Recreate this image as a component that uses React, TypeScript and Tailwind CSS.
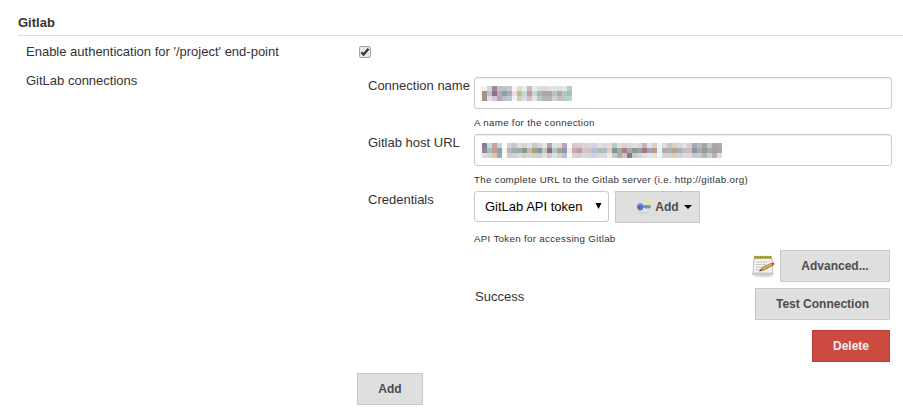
import type { ReactNode } from 'react';

const nameMosaic = [
  ['#f3f0ee', '#cfd9d3', '#9c84a0', '#c9bcc9', '#b9c6c9', '#c8c8ca', '#f6f8f8', '#dedfd2', '#e9ecec', '#cbb8b8', '#e6ebeb', '#d9dfe1', '#dbdbdb', '#e3e2e2', '#dce6e8', '#e3dfd6', '#dfe9e9', '#b8c9c8'],
  ['#a3928b', '#bac7bf', '#8d718e', '#b6a8bb', '#8fa0a4', '#a8aeb4', '#e6e1de', '#bdbc94', '#c5d5d8', '#b99f9f', '#cfd6d7', '#9eb9b8', '#b0a5ac', '#afa5a8', '#b2c5ce', '#b5aa94', '#aec6ca', '#aabdbc'],
  ['#a3928b', '#d9e2df', '#d0c7d1', '#b9a6ba', '#b4c2c4', '#bccaca', '#f4f4f4', '#d0d0b4', '#d2dfe1', '#cfc0c0', '#e1e6e8', '#b6cccb', '#bab4b8', '#b8b3b7', '#cbd1d6', '#cdbfa9', '#b9cbd0', '#bfcdcc'],
];

const urlMosaic = [
  ['#7b819d', '#c9d9d5', '#c7a0a0', '#c6d4d8', '#ffffff', '#d4d2d2', '#c7c6cb', '#dcdfdc', '#d4d4d4', '#dbe2df', '#c8c6c8', '#ced7df', '#e8e6e3', '#b7a5a5', '#dce4e3', '#e5dad0', '#b7a9b8', '#f9f9f9', '#d9c9c9', '#cfcfd2', '#e4cfcf', '#cbdedb', '#d6cfdd', '#dfe1e1', '#d8dcdf', '#e5dad6', '#b6cbce', '#dce0d8', '#e1ccce', '#d9d7de', '#dfe1e0', '#dfd6da', '#c7b0b4', '#dfe3e9', '#dfccc3', '#e5f4fd', '#ded9dc', '#c4c6ca', '#d9d1bf', '#d1dbdf', '#e2dfdf', '#dccaca', '#a6abba', '#b4b8c1', '#a7a6a2', '#bec8cf', '#aaa5a8', '#b7aaa0'],
  ['#8f8799', '#9ec0c1', '#bda092', '#8ba4b5', '#f4f4f2', '#b7b7b8', '#a3aaad', '#99b1ae', '#8d958e', '#c0bab9', '#aaa078', '#789aaf', '#c4c4c4', '#8d7084', '#b7c6c4', '#a5a58c', '#9297b6', '#f3ede5', '#c6acaf', '#b1a3a3', '#d2c7cb', '#d7c0c4', '#b4bfd0', '#b7b8b6', '#b1bec5', '#e0cfc0', '#7f9798', '#a2ac9c', '#a28089', '#b5a6a1', '#8c9796', '#96a2a9', '#a47680', '#9aa6bd', '#b89b88', '#e5f4fd', '#b7a9a5', '#a6b2b6', '#b3a58a', '#a5b3c1', '#c4bbba', '#d2bebc', '#8d96a6', '#a2adb6', '#9d9b9b', '#a4adb8', '#aaa19b', '#a2a6b6'],
  ['#e0d9d9', '#d1d8d9', '#e2c5aa', '#99a9bc', '#ffffff', '#cfcfcf', '#cbd4d2', '#d6dbd8', '#d1cfc6', '#d7d7d7', '#d4d0c2', '#bfd2dc', '#dfdfdf', '#d4c5cf', '#dce3e3', '#d3d2c4', '#b9bad2', '#fafafa', '#dfcfce', '#d7cfcf', '#ded7dc', '#cbd9dc', '#d5cfde', '#d9dcdb', '#d5dce1', '#f2eae0', '#c2cdd1', '#a5b4a2', '#d5bec0', '#7c7c91', '#c6c9c8', '#cdd4db', '#e6dadd', '#e2e6ec', '#e9ded8', '#e5f4fd', '#d9d3d2', '#ced5d9', '#d6cfbf', '#ccd3df', '#dfdcdc', '#e1d5d5', '#c5c8ce', '#c6ccd2', '#aeb9b5', '#c6ced8', '#b7b0ab', '#dae0e9'],
];

function Mosaic({ rows }: { rows: string[][] }) {
  return (
    <div className="border-l-2 border-[#fdf6ee]">
      {rows.map((row, r) => (
        <div key={r} className="flex">
          {row.map((color, c) => (
            <span key={c} className="h-[5px] w-[5px]" style={{ backgroundColor: color }} />
          ))}
        </div>
      ))}
    </div>
  );
}

function Field({ rows }: { rows: string[][] }) {
  return (
    <div className="flex h-8 w-[418px] items-start rounded-[3px] border border-[#c9c9c9] pl-[5px] pt-2 shadow-[inset_0_1px_1px_rgba(0,0,0,0.07)]">
      <Mosaic rows={rows} />
    </div>
  );
}

function Button({ children, className = '' }: { children: ReactNode; className?: string }) {
  return (
    <button className={`flex h-8 items-center justify-center border border-[#c8c8c8] bg-[#dfdfdf] text-[12px] font-bold text-[#4d4d4d] ${className}`}>
      {children}
    </button>
  );
}

function Help({ children, className = '' }: { children: ReactNode; className?: string }) {
  return <p className={`ml-[117px] h-[25px] whitespace-nowrap text-[9.75px] leading-[25px] tracking-[0.3px] ${className}`}>{children}</p>;
}

function Label({ children }: { children: ReactNode }) {
  return <label className="w-[117px] shrink-0 pl-[11px] leading-[18px]">{children}</label>;
}

function KeyIcon() {
  return (
    <svg width="16" height="16" viewBox="0 0 16 16" className="mr-[3px] shrink-0">
      <ellipse cx="7.5" cy="13.8" rx="5.5" ry="0.7" fill="#cbcbcb" />
      <path d="M1 8C1 5.2 2.4 4.2 4.4 4.2C6 4.2 7 5 7.4 6.2H14.6V8.4H13.6V9.6H12.2V8.6H11.2V9.8H9.8V8.8H7.4C7 10.4 6 11.4 4.2 11.4C2.2 11.4 1 10.2 1 8Z" fill="#5478bc" />
      <path d="M2.2 6.2C3.6 4.8 5.6 5 6.6 7H14" fill="none" stroke="#809fd2" strokeWidth="1" />
      <circle cx="2.9" cy="8" r=".8" fill="#3b568f" />
      <path d="M12.3 1L13.2 2.7L15.4 2.2L14.4 4L15.4 5.6L13.2 5.2L12.3 6.6L11.4 5.2L9.6 5.6L10.6 4L9.6 2.4L11.4 2.7Z" fill="#f1e96a" />
    </svg>
  );
}

function NotepadIcon() {
  return (
    <svg width="24" height="24" viewBox="0 0 24 24">
      <ellipse cx="11" cy="22" rx="10" ry="1" fill="#d6d6d6" />
      <path d="M2 4H20L21 20.5H.8Z" fill="#f1f1f1" stroke="#b3b3b3" strokeWidth=".8" />
      <path d="M.8 18.5H20.8V21H.6Z" fill="#c9c9c9" />
      <path d="M2 2H19.5V5H2Z" fill="#b7ad57" />
      <path d="M3.5 1.8V4M6 1.8V4M8.5 1.8V4M11 1.8V4M13.5 1.8V4M16 1.8V4M18.5 1.8V4" stroke="#8b8236" strokeWidth="1" />
      <path d="M4.5 8H15M4 10.5H14M4 13H9.5M3.5 15.5H7.5" stroke="#c5c9cf" strokeWidth="1" />
      <path d="M7.5 17L10.5 13.2L19.5 9.2L21 11.3L11.7 16.2Z" fill="#d0953d" stroke="#8b6030" strokeWidth=".6" />
      <path d="M11 14.5L19.5 10.2" stroke="#eebf68" strokeWidth=".9" />
      <path d="M7 17.3L8.6 15.3L9.7 16.4Z" fill="#4b3928" />
      <path d="M19 9.2L21.2 8.2Q23.3 9 22.2 10.7L20.5 11.5Z" fill="#e04a4a" />
    </svg>
  );
}

export default function App() {
  return (
    <main className="h-[415px] w-[903px] overflow-hidden bg-white font-['Liberation_Sans',Arial,sans-serif] text-[13px] text-[#333]">
      <h2 className="ml-[18px] h-9 border-b border-[#dedede] pt-[14px] font-bold leading-[18px]">Gitlab</h2>
      <section className="flex h-[30px] pl-[26px]">
        <span className="w-[333px] pt-[7px] leading-[18px]">Enable authentication for '/project' end-point</span>
        <span className="mt-[10px] flex h-3 w-3 items-center justify-center rounded-[2px] border border-[#a5a5a5] bg-[#e8e8e8]" role="checkbox" aria-checked="true">
          <svg width="10" height="10" viewBox="0 0 10 10">
            <path d="M1.3 5.2L3.6 7.5L8.5 1.8" fill="none" stroke="#383838" strokeWidth="2.3" />
          </svg>
        </span>
      </section>
      <section className="flex pl-[26px]">
        <span className="w-[331px] shrink-0 pt-[6px] leading-[18px]">GitLab connections</span>
        <div className="w-[535px] pt-[11px]">
          <div className="flex h-8">
            <Label>Connection name</Label>
            <Field rows={nameMosaic} />
          </div>
          <Help className="pt-px">A name for the connection</Help>
          <div className="flex h-8">
            <Label>Gitlab host URL</Label>
            <Field rows={urlMosaic} />
          </div>
          <Help className="pt-px">The complete URL to the Gitlab server (i.e. http://gitlab.org)</Help>
          <div className="flex h-8">
            <Label>Credentials</Label>
            <div className="mr-[6px] flex h-[31px] w-[135px] items-center justify-between rounded-[3px] border border-[#c9c9c9] pl-[10px] pr-[6px] text-black">
              <span>GitLab API token</span>
              <svg width="7" height="6" viewBox="0 0 7 6" className="mb-[2px]"><path d="M0.5 0H6.5L3.5 6Z" fill="#000" /></svg>
            </div>
            <Button className="w-[85px] pl-[13px]">
              <KeyIcon />Add
              <svg width="8" height="4" viewBox="0 0 8 4" className="ml-[5px] shrink-0"><path d="M0 0H8L4 4Z" fill="#000" /></svg>
            </Button>
          </div>
          <Help className="pt-[3px]">API Token for accessing Gitlab</Help>
          <div className="mr-[2px] mt-[2px] flex justify-end">
            <span className="mr-1 pt-[4px]"><NotepadIcon /></span>
            <Button className="w-[110px]">Advanced...</Button>
          </div>
          <div className="mr-[2px] mt-[6px] flex justify-between pl-[118px]">
            <span className="leading-[18px]">Success</span>
            <Button className="w-[135px]">Test Connection</Button>
          </div>
          <div className="mr-[2px] mt-[10px] flex justify-end">
            <button className="h-8 w-[78px] border border-[#b73d35] bg-[#cd4a41] text-[12px] font-bold text-[#f5eeee]">Delete</button>
          </div>
          <Button className="mt-[11px] w-[66px]">Add</Button>
        </div>
      </section>
    </main>
  );
}
